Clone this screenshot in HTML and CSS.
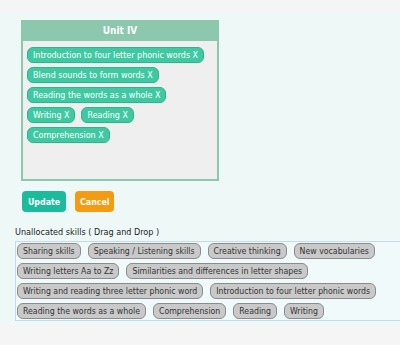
FILE: index.html
```html
<!DOCTYPE html>
<html lang="en">
<head>
  <meta charset="UTF-8" />
  <meta name="viewport" content="width=device-width, initial-scale=1.0" />
  <title>Unit skills</title>
  <link rel="stylesheet" href="styles.css">
</head>
<body>
  <div class="page">
    <div class="unit-card">
      <div class="unit-header">Unit IV</div>
      <div class="unit-body">
        <span class="skill allocated">Introduction to four letter phonic words X</span>
        <span class="skill allocated">Blend sounds to form words X</span>
        <span class="skill allocated">Reading the words as a whole X</span>
        <span class="skill allocated">Writing X</span>
        <span class="skill allocated">Reading X</span>
        <span class="skill allocated">Comprehension X</span>
      </div>
    </div>

    <div class="actions">
      <button class="btn btn-update">Update</button>
      <button class="btn btn-cancel">Cancel</button>
    </div>

    <p class="pool-label">Unallocated skills ( Drag and Drop )</p>
    <div class="pool">
      <span class="skill free">Sharing skills</span>
      <span class="skill free">Speaking / Listening skills</span>
      <span class="skill free">Creative thinking</span>
      <span class="skill free">New vocabularies</span>
      <span class="skill free">Writing letters Aa to Zz</span>
      <span class="skill free">Similarities and differences in letter shapes</span>
      <span class="skill free">Writing and reading three letter phonic word</span>
      <span class="skill free">Introduction to four letter phonic words</span>
      <span class="skill free">Reading the words as a whole</span>
      <span class="skill free">Comprehension</span>
      <span class="skill free">Reading</span>
      <span class="skill free">Writing</span>
    </div>
  </div>
</body>
</html>
```

FILE: styles.css
```css
:root {
  --page-bg: #f5f5f5;
  --panel-bg: #eef9f7;
  --card-green: #8cc8ae;
  --chip-teal: #3fc9a3;
  --chip-teal-border: #2eb48e;
  --chip-gray: #c9c9c9;
  --chip-gray-border: #8b8b8b;
}

html, body {
  overflow-x: hidden;
}

body {
  margin: 0;
  background: var(--page-bg);
  font-family: 'DejaVu Sans Condensed', 'DejaVu Sans', sans-serif;
  font-stretch: condensed;
  font-size: 9px;
  color: #222;
}

.page {
  margin-top: 12px;
  background: var(--panel-bg);
  padding: 8px 0 4px 15px;
  overflow: hidden;
}

.unit-card {
  margin-left: 6px;
  width: 198px;
  height: 161px;
  box-sizing: border-box;
  border: 2px solid var(--card-green);
  border-top: none;
  background: #efefef;
}

.unit-header {
  height: 21px;
  line-height: 21px;
  margin: 0 -2px;
  background: var(--card-green);
  color: white;
  font-weight: bold;
  font-size: 10px;
  text-align: center;
}

.unit-body {
  display: flex;
  flex-wrap: wrap;
  align-items: flex-start;
  gap: 4px 6px;
  padding: 6px 4px 0;
}

.skill {
  display: inline-block;
  height: 16px;
  box-sizing: border-box;
  line-height: 14px;
  padding: 0 5px;
  border: 1px solid;
  border-radius: 6px;
  white-space: nowrap;
}

.skill.allocated {
  background: var(--chip-teal);
  border-color: var(--chip-teal-border);
  color: white;
  font-size: 8.9px;
}

.skill.free {
  background: var(--chip-gray);
  border-color: var(--chip-gray-border);
  color: #333;
  font-size: 8.7px;
}

.actions {
  display: flex;
  gap: 9px;
  margin: 10px 0 0 7px;
}

.btn {
  height: 21px;
  border: none;
  border-radius: 4px;
  padding: 0 5px;
  font-family: inherit;
  font-stretch: condensed;
  font-size: 8.8px;
  font-weight: bold;
  color: white;
  cursor: pointer;
}

.btn-update {
  width: 44px;
  background: #1bbc9b;
}

.btn-cancel {
  width: 39px;
  background: #f39c12;
}

.pool-label {
  margin: 14px 0 3px;
  line-height: 12px;
}

.pool {
  width: 440px;
  box-sizing: border-box;
  display: flex;
  flex-wrap: wrap;
  gap: 4px 7px;
  padding: 1px;
  border: 1px solid #bfdce7;
  background: #f0fafa;
}
```
